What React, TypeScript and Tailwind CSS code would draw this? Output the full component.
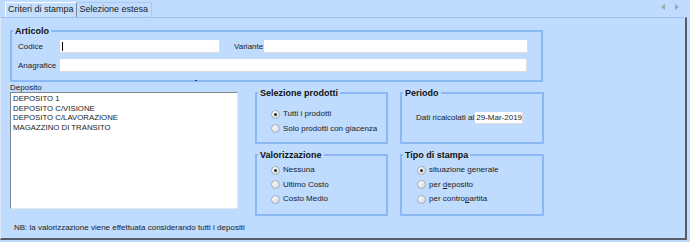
import React from 'react';

const font = { fontFamily: '"Liberation Sans", Arial, sans-serif' };

type RadioProps = { label: React.ReactNode; checked?: boolean };

const Radio: React.FC<RadioProps> = ({ label, checked }) => (
  <div className="flex items-center gap-[3px] h-[14.5px]">
    <span className="w-[9px] h-[9px] rounded-full border border-[#a3adb8] bg-gradient-to-br from-white to-[#d3d8de] flex items-center justify-center">
      {checked && <span className="w-[3px] h-[3px] rounded-full bg-[#2a2a2a]" />}
    </span>
    <span>{label}</span>
  </div>
);

type GroupProps = { title: string; className: string; inner: string; children: React.ReactNode };

// group box: the legend sits on the top border, content padded inside a wrapper
const Group: React.FC<GroupProps> = ({ title, className, inner, children }) => (
  <fieldset className={`border-2 border-[#8cb9f5] ${className}`}>
    <legend className="ml-[1px] px-[2px] text-[9px] font-bold leading-[10px] text-[#111]">{title}</legend>
    <div className={inner}>{children}</div>
  </fieldset>
);

const Field: React.FC<{ className: string; children?: React.ReactNode }> = ({ className, children }) => (
  <div className={`h-[13px] bg-white border-r border-b border-[#d9dde2] ${className}`}>{children}</div>
);

const App: React.FC = () => {
  const depositi = ['DEPOSITO 1', 'DEPOSITO C/VISIONE', 'DEPOSITO C/LAVORAZIONE', 'MAGAZZINO DI TRANSITO'];

  return (
    <div style={font} className="w-[690px] h-[242px] bg-[#bfdbfe] text-[#222] text-[8px] overflow-hidden">
      {/* Tabs */}
      <div className="h-[17px] flex items-end pl-[5px] pr-[9px]">
        <div className="h-[15px] px-[2px] flex items-center text-[9px] bg-[#c4defd] border-l border-t border-white border-r border-r-[#7d8894]">
          Criteri di stampa
        </div>
        <div className="h-[15px] px-[3px] flex items-center text-[9px] border-r border-t border-[#a9c9f2]">
          Selezione estesa
        </div>
        <div className="ml-auto h-[15px] flex items-center gap-[10px] pb-[6px] pr-[2px]">
          <span className="w-0 h-0 border-y-[3px] border-y-transparent border-r-[4px] border-r-[#9aa7b4]" />
          <span className="w-0 h-0 border-y-[3px] border-y-transparent border-l-[4px] border-l-[#9aa7b4]" />
        </div>
      </div>

      {/* Panel */}
      <div className="w-[687px] h-[223px] border-t border-[#9ec2ef] border-l border-l-[#dbe9fb] border-r-2 border-r-[#555e68] border-b-2 border-b-[#555e68] pl-[9px] pt-[8px]">
        <Group title="Articolo" className="w-[533px] h-[56px]" inner="pl-[6px] pt-[4px] relative h-[42px]">
          <div className="flex items-center">
            <span className="w-[42px]">Codice</span>
            <Field className="w-[160px] flex items-center pl-[2px]">
              <span className="w-px h-[9px] bg-black" />
            </Field>
            <span className="ml-[14px] w-[30px] overflow-hidden whitespace-nowrap">Variante</span>
            <Field className="w-[264px]" />
          </div>
          <div className="flex items-center mt-[6px]">
            <span className="w-[42px]">Anagrafice</span>
            <Field className="w-[467px]" />
          </div>
          <span className="absolute left-[183px] bottom-[-3px] w-[2px] h-[1px] bg-[#333]" />
        </Group>

        <div className="flex items-start mt-[1px]">
          <div className="w-[228px]">
            <div className="leading-[9px]">Deposito</div>
            <div className="h-[117px] bg-white border-l border-t border-[#7f858c] border-r border-r-[#e3e6ea] border-b border-b-[#e3e6ea] pl-[2px] pt-[1px] leading-[9.67px] text-[7.8px]">
              {depositi.map((d) => (
                <div key={d}>{d}</div>
              ))}
            </div>
          </div>

          <div className="ml-[17px] mt-[5px] flex flex-col gap-[6px]">
            <Group title="Selezione prodotti" className="w-[133px] h-[56px]" inner="pl-[14px] pt-[9px]">
              <Radio checked label="Tutti i prodotti" />
              <Radio label="Solo prodotti con giacenza" />
            </Group>
            <Group title="Valorizzazione" className="w-[133px] h-[66px]" inner="pl-[14px] pt-[3px]">
              <Radio checked label="Nessuna" />
              <Radio label="Ultimo Costo" />
              <Radio label="Costo Medio" />
            </Group>
          </div>

          <div className="ml-[12px] mt-[5px] flex flex-col gap-[6px]">
            <Group title="Periodo" className="w-[144px] h-[56px]" inner="pl-[14px] pt-[14px]">
              <div className="flex items-center">
                <span>Dati ricalcolati al</span>
                <span className="ml-[1px] w-[48px] h-[12px] pl-[1px] bg-white flex items-center border-r border-b border-[#d9dde2] whitespace-nowrap overflow-hidden">29-Mar-2019</span>
              </div>
            </Group>
            <Group title="Tipo di stampa" className="w-[144px] h-[66px]" inner="pl-[15px] pt-[3px]">
              <Radio checked label="situazione generale" />
              <Radio label={<>per <u>d</u>eposito</>} />
              <Radio label={<>per contro<u>p</u>artita</>} />
            </Group>
          </div>
        </div>

        <div className="mt-[6px] pl-[4px]">NB: la valorizzazione viene effettuata considerando tutti i depositi</div>
      </div>
    </div>
  );
};

export default App;
